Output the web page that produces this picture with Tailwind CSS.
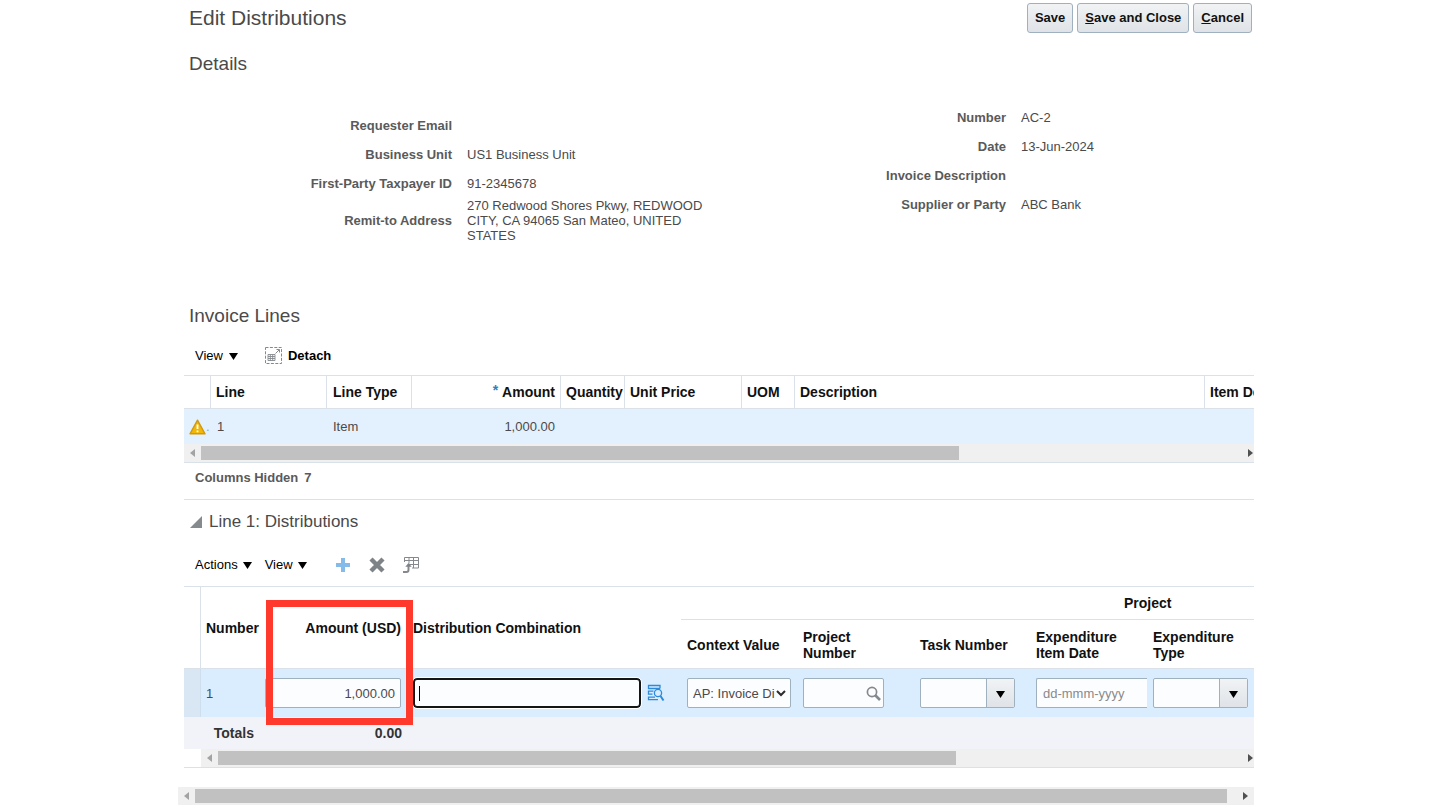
<!DOCTYPE html>
<html lang="en">
<head>
  <meta charset="UTF-8" />
  <meta name="viewport" content="width=device-width, initial-scale=1.0"/>
  <title>Edit Distributions</title>

  <!-- Tailwind CSS -->
  <script src="https://cdn.jsdelivr.net/npm/@tailwindcss/browser@4"></script>
</head>
<body class="bg-white font-['Liberation_Sans',Arial,sans-serif] text-[13px] leading-[15px] text-[#4a4a4a] overflow-hidden">

  <main class="px-[178px]">
    <div class="pl-[6px]">

      <!-- Page header -->
      <header class="flex justify-between items-center h-9 pl-[5px] pr-[2px]">
        <h1 class="text-[21px] leading-7">Edit Distributions</h1>
        <div class="flex gap-1">
          <button type="button" class="h-[30px] px-[7px] pb-[2px] rounded-[3px] border border-[#9fb0bf] bg-linear-to-b from-[#f1f3f5] to-[#dfe3e7] font-bold text-[#111]">Save</button>
          <button type="button" class="h-[30px] px-[7px] pb-[2px] rounded-[3px] border border-[#9fb0bf] bg-linear-to-b from-[#f1f3f5] to-[#dfe3e7] font-bold text-[#111]"><span class="underline">S</span>ave and Close</button>
          <button type="button" class="h-[30px] px-[7px] pb-[2px] rounded-[3px] border border-[#9fb0bf] bg-linear-to-b from-[#f1f3f5] to-[#dfe3e7] font-bold text-[#111]"><span class="underline">C</span>ancel</button>
        </div>
      </header>

      <!-- Details -->
      <section class="pt-[14px]">
        <h2 class="pl-[5px] text-[19px] leading-7">Details</h2>
        <div class="grid grid-cols-2 items-start">
          <dl class="grid grid-cols-2 gap-x-[15px] auto-rows-[minmax(29px,auto)] items-center pt-[33px]">
            <dt class="text-right font-bold text-[#5a5a5a] pl-2 -mr-2">Requester Email</dt>
            <dd></dd>
            <dt class="text-right font-bold text-[#5a5a5a] pl-2 -mr-2">Business Unit</dt>
            <dd class="pl-2">US1 Business Unit</dd>
            <dt class="text-right font-bold text-[#5a5a5a] pl-2 -mr-2">First-Party Taxpayer ID</dt>
            <dd class="pl-2">91-2345678</dd>
            <dt class="text-right font-bold text-[#5a5a5a] pl-2 -mr-2">Remit-to Address</dt>
            <dd class="pl-2 pr-2">270 Redwood Shores Pkwy, REDWOOD CITY, CA 94065 San Mateo, UNITED STATES</dd>
          </dl>
          <dl class="grid grid-cols-[287px_1fr] gap-x-[15px] auto-rows-[minmax(29px,auto)] items-center pt-[25px]">
            <dt class="text-right font-bold text-[#5a5a5a]">Number</dt>
            <dd>AC-2</dd>
            <dt class="text-right font-bold text-[#5a5a5a]">Date</dt>
            <dd>13-Jun-2024</dd>
            <dt class="text-right font-bold text-[#5a5a5a]">Invoice Description</dt>
            <dd></dd>
            <dt class="text-right font-bold text-[#5a5a5a]">Supplier or Party</dt>
            <dd>ABC Bank</dd>
          </dl>
        </div>
      </section>

      <!-- Invoice lines -->
      <section class="pt-[59px]">
        <h2 class="pl-[5px] text-[19px] leading-7">Invoice Lines</h2>
        <div class="flex items-center h-[35px] mt-2 mb-[2px] pl-[11px] text-black">
          <button type="button" class="flex items-center gap-[6px]">View
            <svg class="mt-[2px]" width="9" height="7" viewBox="0 0 9 7"><path d="M0 0h9L4.5 7z"/></svg>
          </button>
          <button type="button" class="flex items-center gap-[6px] ml-[27px] font-bold">
            <svg width="17" height="17" viewBox="0 0 17 17" fill="none" stroke="#85898d">
              <path d="M.5 .5h16v16H.5z" stroke-dasharray="3 1.4"/>
              <path d="M3 7.500h7v6H3zM3 9.500h7M3 11.500h7M5.300 7.500v6M7.700 7.500v6" stroke-width=".9"/>
              <path d="M10.500 6.500L14 3M11.500 2.500h3v3"/>
            </svg>
            Detach
          </button>
        </div>

        <div class="border-y border-[#dae1e8] overflow-hidden">
          <table class="w-full table-fixed border-separate border-spacing-0 whitespace-nowrap">
            <colgroup>
              <col class="w-[27px]"><col class="w-[116px]"><col class="w-[85px]"><col class="w-[149px]"><col class="w-[64px]"><col class="w-[117px]"><col class="w-[53px]"><col class="w-[410px]"><col>
            </colgroup>
            <thead>
              <tr class="h-[33px] text-left text-[14px] leading-4 text-[#111]">
                <th class="border-r border-b border-[#dae1e8]"></th>
                <th class="border-r border-b border-[#dae1e8] px-[5px]">Line</th>
                <th class="border-r border-b border-[#dae1e8] px-[6px]">Line Type</th>
                <th class="border-r border-b border-[#dae1e8] px-[5px]">
                  <div class="flex justify-end gap-1"><span class="text-[#2f7fc1] leading-3">*</span>Amount</div>
                </th>
                <th class="border-r border-b border-[#dae1e8] pl-[5px]">Quantity</th>
                <th class="border-r border-b border-[#dae1e8] px-[5px]">Unit Price</th>
                <th class="border-r border-b border-[#dae1e8] px-[5px]">UOM</th>
                <th class="border-r border-b border-[#dae1e8] px-[5px]">Description</th>
                <th class="border-b border-[#dae1e8] pl-[5px] overflow-hidden">Item De</th>
              </tr>
            </thead>
            <tbody>
              <tr class="h-[35px] bg-[#e3f1ff]">
                <td class="pl-[5px]">
                  <div class="flex items-center">
                    <svg width="17" height="16" viewBox="0 0 17 16">
                      <path d="M8.5 1.2L16 14.8H1z" fill="#f2b705" stroke="#cf9a12" stroke-linejoin="round" stroke-width="1.4"/>
                      <path d="M8.5 5.5v4.6M8.5 11.4v1.8" stroke="#fff" stroke-width="1.8"/>
                    </svg>
                    <span class="text-[#8aa]">.</span>
                  </div>
                </td>
                <td class="px-[6px]">1</td>
                <td class="px-[6px]">Item</td>
                <td class="px-[6px] text-right">1,000.00</td>
                <td></td><td></td><td></td><td></td><td></td>
              </tr>
            </tbody>
          </table>
          <!-- Horizontal scrollbar -->
          <div class="flex items-center h-[18px] bg-[#f0f0f0]">
            <div class="w-[17px] flex justify-center"><svg width="5" height="8" viewBox="0 0 5 8" fill="#a3a3a3"><path d="M5 0v8L0 4z"/></svg></div>
            <div class="flex-1"><div class="h-[14px] w-[72.5%] bg-[#c1c1c1]"></div></div>
            <div class="w-2 flex justify-center"><svg width="5" height="8" viewBox="0 0 5 8" fill="#505050"><path d="M0 0v8l5-4z"/></svg></div>
          </div>
        </div>
        <p class="flex items-center gap-[6px] h-[29px] pl-[11px] font-bold text-[#5a5a5a]">Columns Hidden <span>7</span></p>
      </section>

      <!-- Distributions of the selected line -->
      <section class="mt-[7px] border-t border-[#dae1e8]">
        <h2 class="flex items-center gap-[7px] h-[43px] pl-[6px] text-[17px]">
          <svg width="12" height="12" viewBox="0 0 12 12" fill="#858a8f"><path d="M12 0v12H0z"/></svg>
          Line 1: Distributions
        </h2>
        <div class="flex items-center h-[43px] pl-[11px] text-black">
          <button type="button" class="flex items-center gap-[5px]">Actions
            <svg class="mt-[2px]" width="9" height="7" viewBox="0 0 9 7"><path d="M0 0h9L4.5 7z"/></svg>
          </button>
          <button type="button" class="flex items-center gap-[5px] ml-[13px]">View
            <svg class="mt-[2px]" width="9" height="7" viewBox="0 0 9 7"><path d="M0 0h9L4.5 7z"/></svg>
          </button>
          <button type="button" aria-label="Add Row" class="ml-[28px]">
            <svg width="16" height="16" viewBox="0 0 16 16"><path d="M6 1h4v5h5v4h-5v5H6v-5H1V6h5z" fill="#84bbe8"/></svg>
          </button>
          <button type="button" aria-label="Delete" class="ml-[18px]">
            <svg width="16" height="16" viewBox="0 0 16 16"><path d="M2 2l12 12M14 2L2 14" stroke="#7e8387" stroke-width="4.4"/></svg>
          </button>
          <button type="button" aria-label="Export to Excel" class="ml-[17px]">
            <svg width="18" height="18" viewBox="0 0 18 18" fill="none" stroke="#85898d">
              <path d="M2.500 6V1.500h14v10.500H10M2 4.500h14.500M7 8.500h9.500M7 1.500v6M11.500 1.500v10.500"/>
              <path d="M1 16h3.500q2 0 2-2V9.500" stroke-width="2"/>
              <path d="M3.300 10.800L6.500 7l3.200 3.800z" fill="#7e8387" stroke="none"/>
            </svg>
          </button>
        </div>

        <div class="relative border-y border-[#dae1e8]">
          <table class="w-full table-fixed border-separate border-spacing-0">
            <colgroup>
              <col class="w-[17px]"><col class="w-[58px]"><col class="w-[148px]"><col class="w-[274px]"><col class="w-[116px]"><col class="w-[117px]"><col class="w-[116px]"><col class="w-[117px]"><col>
            </colgroup>
            <thead class="text-left text-[14px] leading-4 text-[#111]">
              <tr class="h-[33px]">
                <th rowspan="2" class="border-r border-b border-[#dae1e8]"></th>
                <th rowspan="2" class="border-b border-[#dae1e8] pl-[5px]">Number</th>
                <th rowspan="2" class="border-b border-[#dae1e8] px-[6px] text-right">Amount (USD)</th>
                <th rowspan="2" class="border-b border-[#dae1e8] px-[6px]">Distribution Combination</th>
                <th colspan="5" class="border-b border-[#dae1e8]"><div class="pl-[443px]">Project</div></th>
              </tr>
              <tr class="h-[49px]">
                <th class="border-b border-[#dae1e8] px-[6px] pt-[2px]">Context Value</th>
                <th class="border-b border-[#dae1e8] px-[6px] pt-[2px]">Project<br>Number</th>
                <th class="border-b border-[#dae1e8] px-[6px] pt-[2px]">Task Number</th>
                <th class="border-b border-[#dae1e8] px-[6px] pt-[2px]">Expenditure<br>Item Date</th>
                <th class="border-b border-[#dae1e8] px-[6px] pt-[2px]">Expenditure<br>Type</th>
              </tr>
            </thead>
            <tbody>
              <tr class="h-12 bg-[#d9edff]">
                <td class="bg-[#d9e6f3] border-r border-[#cfdeec]"></td>
                <td class="pl-[5px]">1</td>
                <td class="px-[6px]"><input type="text" aria-label="Amount (USD)" value="1,000.00" class="block w-full h-[30px] px-[5px] rounded-[2px] border border-[#9fb0bf] bg-[#fcfdff] text-right"></td>
                <td class="pl-[6px]">
                  <div class="flex items-center gap-[6px]">
                    <div class="relative">
                      <input type="text" aria-label="Distribution Combination" class="block w-[228px] h-[30px] px-1 rounded-[4px] border-2 border-[#151515] bg-[#fcfdff] outline-1 outline-white">
                      <span class="absolute left-[6px] top-2 w-px h-[15px] bg-black"></span>
                    </div>
                    <button type="button" aria-label="Select combination">
                      <svg width="18" height="18" viewBox="0 0 18 18" fill="none" stroke="#2d8ad8" stroke-width="1.300">
                        <path d="M13 4.500V1.500H1.500v3H13M6.500 7.200h-5v3h4M8 13.200H1.500v2.500H11"/>
                        <circle cx="11" cy="9" r="3.600"/>
                        <path d="M13.500 12l3 4.500" stroke-width="2"/>
                      </svg>
                    </button>
                  </div>
                </td>
                <td class="px-[6px]">
                  <div class="relative">
                    <select aria-label="Context Value" class="block w-full h-[30px] pl-[5px] pr-[15px] rounded-[2px] border border-[#9fb0bf] bg-[#fcfdff] appearance-none overflow-hidden">
                      <option>AP: Invoice Di</option>
                    </select>
                    <svg class="absolute right-[5px] top-[12px] pointer-events-none" width="10" height="7" viewBox="0 0 10 7" fill="none" stroke="#2b2b2b" stroke-width="2"><path d="M1 1l4 4 4-4"/></svg>
                  </div>
                </td>
                <td class="pl-[6px]">
                  <div class="flex items-center w-[81px] h-[30px] pr-[2px] rounded-[2px] border border-[#9fb0bf] bg-[#fcfdff]">
                    <input type="text" aria-label="Project Number" class="min-w-0 flex-1 h-full px-1">
                    <button type="button" aria-label="Search project">
                      <svg width="15" height="15" viewBox="0 0 15 15" fill="none" stroke="#85898d"><circle cx="6" cy="6" r="4.600" stroke-width="1.700"/><path d="M9 9l5 5" stroke-width="2.600"/></svg>
                    </button>
                  </div>
                </td>
                <td class="pl-[6px]">
                  <div class="flex w-[95px] h-[30px] rounded-[2px] border border-[#9fb0bf] bg-[#fcfdff]">
                    <input type="text" aria-label="Task Number" class="min-w-0 flex-1 px-1">
                    <button type="button" aria-label="Show task numbers" class="w-7 flex items-center justify-center border-l border-[#9fb0bf] bg-linear-to-b from-[#f1f3f5] to-[#dfe3e7]">
                      <svg class="mt-[2px]" width="9" height="7" viewBox="0 0 9 7"><path d="M0 0h9L4.5 7z"/></svg>
                    </button>
                  </div>
                </td>
                <td class="pl-[6px]"><input type="text" aria-label="Expenditure Item Date" placeholder="dd-mmm-yyyy" class="block w-full h-[30px] px-[6px] rounded-l-[2px] border border-r-0 border-[#9fb0bf] bg-[#fcfdff] placeholder:text-[#8a8a8a]"></td>
                <td class="pl-[6px]">
                  <div class="flex w-[95px] h-[30px] rounded-[2px] border border-[#9fb0bf] bg-[#fcfdff]">
                    <input type="text" aria-label="Expenditure Type" class="min-w-0 flex-1 px-1">
                    <button type="button" aria-label="Show expenditure types" class="w-7 flex items-center justify-center border-l border-[#9fb0bf] bg-linear-to-b from-[#f1f3f5] to-[#dfe3e7]">
                      <svg class="mt-[2px]" width="9" height="7" viewBox="0 0 9 7"><path d="M0 0h9L4.5 7z"/></svg>
                    </button>
                  </div>
                </td>
              </tr>
            </tbody>
            <tfoot>
              <tr class="h-8 bg-[#f2f3f8] text-[14px] font-bold text-[#333] text-right">
                <td colspan="2" class="pr-[5px]">Totals</td>
                <td class="pr-[5px]">0.00</td>
                <td colspan="6"></td>
              </tr>
            </tfoot>
          </table>
          <!-- Horizontal scrollbar -->
          <div class="flex items-center h-[18px] ml-[17px] bg-[#f0f0f0]">
            <div class="w-[17px] flex justify-center"><svg width="5" height="8" viewBox="0 0 5 8" fill="#a3a3a3"><path d="M5 0v8L0 4z"/></svg></div>
            <div class="flex-1"><div class="h-[14px] w-[71.8%] bg-[#c1c1c1]"></div></div>
            <div class="w-2 flex justify-center"><svg width="5" height="8" viewBox="0 0 5 8" fill="#505050"><path d="M0 0v8l5-4z"/></svg></div>
          </div>

          <!-- Amount highlight -->
          <div class="absolute left-[82px] top-[13px] w-[147px] h-[125px] border-7 border-[#ff392c] pointer-events-none"></div>
        </div>
      </section>
    </div>

    <!-- Page scrollbar -->
    <div class="flex items-center h-[18px] mt-[19px] bg-[#f0f0f0]">
      <div class="w-[17px] flex justify-center"><svg width="5" height="8" viewBox="0 0 5 8" fill="#a3a3a3"><path d="M5 0v8L0 4z"/></svg></div>
      <div class="flex-1"><div class="h-[14px] w-[99%] bg-[#c1c1c1]"></div></div>
      <div class="w-[17px] flex justify-center"><svg width="5" height="8" viewBox="0 0 5 8" fill="#505050"><path d="M0 0v8l5-4z"/></svg></div>
    </div>
  </main>

</body>
</html>
